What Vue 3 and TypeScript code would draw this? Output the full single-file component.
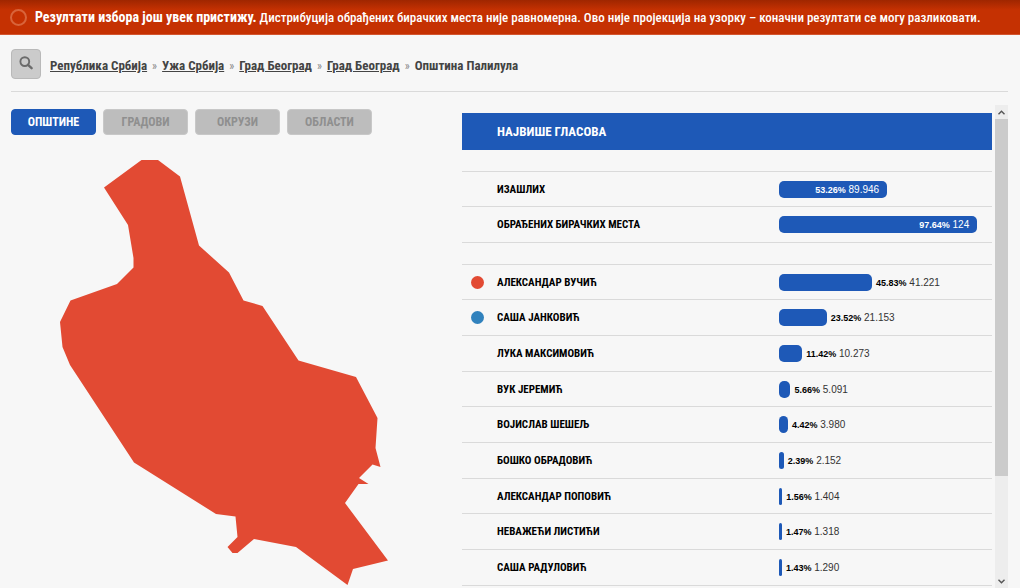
<script setup lang="ts">
import { ref } from 'vue'

interface Result {
  name: string
  percent: number
  label: string
  votes: string
  color?: string
}

const crumbs: string[] = ['Република Србија', 'Ужа Србија', 'Град Београд', 'Град Београд']
const levels: string[] = ['Општине', 'Градови', 'Окрузи', 'Области']
const activeLevel = ref(0)

const turnout: Result[] = [
  { name: 'Изашлих', percent: 53.26, label: '53.26%', votes: '89.946' },
  { name: 'Обрађених бирачких места', percent: 97.64, label: '97.64%', votes: '124' },
]

const candidates: Result[] = [
  { name: 'Александар Вучић', percent: 45.83, label: '45.83%', votes: '41.221', color: 'red' },
  { name: 'Саша Јанковић', percent: 23.52, label: '23.52%', votes: '21.153', color: 'blue' },
  { name: 'Лука Максимовић', percent: 11.42, label: '11.42%', votes: '10.273' },
  { name: 'Вук Јеремић', percent: 5.66, label: '5.66%', votes: '5.091' },
  { name: 'Војислав Шешељ', percent: 4.42, label: '4.42%', votes: '3.980' },
  { name: 'Бошко Обрадовић', percent: 2.39, label: '2.39%', votes: '2.152' },
  { name: 'Александар Поповић', percent: 1.56, label: '1.56%', votes: '1.404' },
  { name: 'Неважећи листићи', percent: 1.47, label: '1.47%', votes: '1.318' },
  { name: 'Саша Радуловић', percent: 1.43, label: '1.43%', votes: '1.290' },
]
</script>

<template>
  <div class="page">
    <div class="alert" role="status">
      <span class="ring"></span>
      <p><b>Резултати избора још увек пристижу.</b> Дистрибуција обрађених бирачких места није равномерна. Ово није пројекција на узорку – коначни резултати се могу разликовати.</p>
    </div>

    <header class="top">
      <button class="search" type="button" aria-label="Претрага">
        <svg width="14" height="14" viewBox="0 0 14 14" fill="none" stroke="#6b6b6b">
          <circle cx="5.8" cy="5.6" r="4.4" stroke-width="1.9" />
          <path d="M9 8.8 L12.6 12.2" stroke-width="2.3" stroke-linecap="round" />
        </svg>
      </button>
      <nav class="crumbs">
        <template v-for="(crumb, i) in crumbs" :key="i">
          <a href="#">{{ crumb }}</a><span class="sep">»</span>
        </template>
        <span>Општина Палилула</span>
      </nav>
    </header>

    <main class="content">
      <section class="map-side">
        <div class="levels">
          <button
            v-for="(level, i) in levels"
            :key="level"
            type="button"
            :class="{ active: i === activeLevel }"
            @click="activeLevel = i"
          >{{ level }}</button>
        </div>
        <svg class="map" viewBox="0 0 331 427" role="img" aria-label="Општина Палилула">
          <path d="M82.5 1H99L121 17.5L140 86.5L170 113.5L184.5 141.5L203.5 147L239.5 201.5L297 218L318.5 259L316.5 289L321.5 308L313.5 305.5L300 319L309.5 325H299.5L286 344L329 401.5L294 410L288.5 426L237 388L195 380L178.5 394H173.5L168.5 388L178.5 378L176.5 357.5L157 355L75 303.5L11 206L3.5 188L1 163L11.5 141.5L58 125L74.5 108.5V99L69 66L45 28.5Z" />
        </svg>
      </section>

      <section class="results">
        <h2>Највише гласова</h2>
        <table v-for="(group, g) in [turnout, candidates]" :key="g">
          <tbody>
            <tr v-for="row in group" :key="row.name">
              <td class="mark"><span v-if="row.color" class="dot" :class="row.color"></span></td>
              <th scope="row">{{ row.name }}</th>
              <td class="score">
                <div class="track">
                  <div class="bar" :style="{ width: row.percent + '%' }">
                    <span v-if="g === 0" class="value"><b>{{ row.label }}</b> {{ row.votes }}</span>
                  </div>
                  <span v-if="g === 1" class="value"><b>{{ row.label }}</b> {{ row.votes }}</span>
                </div>
              </td>
            </tr>
          </tbody>
        </table>
      </section>

      <div class="scroller">
        <button type="button" aria-label="Горе">
          <svg width="7" height="5" viewBox="0 0 7 5"><path d="M.5 4.2L3.5 1.2L6.5 4.2" /></svg>
        </button>
        <div class="thumb"></div>
        <button type="button" aria-label="Доле">
          <svg width="7" height="5" viewBox="0 0 7 5"><path d="M.5 .8L3.5 3.8L6.5 .8" /></svg>
        </button>
      </div>
    </main>
  </div>
</template>

<style>
body {
  margin: 0;
  background: #f7f7f7;
}
</style>

<style scoped>
.page {
  display: flex;
  flex-direction: column;
  min-height: 100vh;
  font-family: 'Roboto Condensed', 'Liberation Sans Narrow', Roboto, sans-serif;
}
button {
  font-family: inherit;
  cursor: pointer;
}
.alert {
  display: flex;
  align-items: center;
  gap: 8px;
  box-sizing: border-box;
  min-height: 35px;
  padding: 0 10px;
  color: #fff;
  background: linear-gradient(#9f2600, #c53102 10px);
  border-bottom: 1px solid #d3552f;
}
.ring {
  flex: none;
  box-sizing: border-box;
  width: 17px;
  height: 17px;
  border: 2px solid #d8643b;
  border-radius: 50%;
}
.alert p {
  margin: 0;
  font-size: 13px;
  font-weight: 500;
  line-height: 18px;
}
.alert b {
  font-size: 14px;
}
.top {
  display: flex;
  align-items: center;
  gap: 9px;
  margin: 0 12px 0 11px;
  padding: 14px 0 12px;
  border-bottom: 1px solid #dadada;
}
.search {
  display: flex;
  align-items: center;
  justify-content: center;
  width: 30px;
  height: 30px;
  padding: 0 0 2px;
  background: #cbcbcb;
  border: 1px solid #b9b9b9;
  border-radius: 4px;
}
.crumbs {
  padding-top: 3px;
  font-size: 13px;
  font-weight: 700;
  line-height: 16px;
  color: #444;
}
.crumbs a {
  color: inherit;
}
.sep {
  margin: 0 5px;
  font-size: 12px;
  font-weight: 400;
  color: #888;
}
.content {
  display: grid;
  flex: 1;
  grid-template-columns: minmax(0, 451fr) minmax(0, 530fr) 16px;
  margin: 0 12px 0 11px;
}
.levels {
  display: flex;
  gap: 7px;
  padding-top: 17px;
}
.levels button {
  width: 85px;
  height: 26px;
  padding: 0;
  font-size: 12px;
  font-weight: 700;
  text-transform: uppercase;
  color: #8f8f8f;
  background: #bdbdbd;
  border: 1px solid #c8c8c8;
  border-radius: 4px;
}
.levels button.active {
  color: #fff;
  background: #1e59b7;
  border-color: #1e59b7;
}
.map {
  display: block;
  width: 331px;
  margin: 24px 0 0 48px;
}
.map path {
  fill: #e24a33;
}
.results {
  padding-top: 21px;
}
.results h2 {
  margin: 0;
  padding: 0 35px;
  font-size: 13px;
  line-height: 37px;
  text-transform: uppercase;
  color: #fff;
  background: #1e59b7;
}
.results table {
  width: 100%;
  margin-top: 21px;
  border-collapse: separate;
  border-spacing: 0;
  table-layout: fixed;
  border-bottom: 1px solid #dadada;
}
.results td,
.results th {
  height: 35px;
  padding: 0;
  text-align: left;
  border-top: 1px solid #dadada;
}
.results tr:nth-child(3n + 1) > * {
  height: 34px;
}
.results th {
  font-size: 11px;
  text-transform: uppercase;
  color: #000;
}
.results .mark {
  width: 35px;
}
.results .score {
  width: 213px;
}
.dot {
  display: block;
  width: 13px;
  height: 13px;
  margin-left: 9px;
  border-radius: 50%;
}
.red {
  background: #e24a33;
}
.blue {
  background: #3182bd;
}
.track {
  display: flex;
  align-items: center;
  gap: 4px;
  margin-right: 10px;
}
.bar {
  display: flex;
  flex: none;
  align-items: center;
  justify-content: flex-end;
  height: 17px;
  border-radius: 5px;
  background: #1e59b7;
}
.value {
  padding-top: 1px;
  font-family: 'Liberation Sans', Arial, sans-serif;
  font-size: 10px;
  line-height: 12px;
  white-space: nowrap;
  color: #333;
}
.value b {
  font-size: 9px;
  color: #000;
}
.bar .value {
  padding-right: 8px;
  color: #fff;
}
.bar .value b {
  color: inherit;
}
.scroller {
  display: flex;
  flex-direction: column;
  justify-self: end;
  width: 13px;
  margin-top: 13px;
  background: #ededed;
}
.scroller button {
  display: flex;
  flex: none;
  align-items: center;
  justify-content: center;
  height: 14px;
  padding: 0;
  background: none;
  border: 0;
}
.scroller button:last-child {
  margin-top: auto;
}
.scroller path {
  fill: none;
  stroke: #555;
  stroke-width: 1.4;
}
.thumb {
  height: 74%;
  background: #cbcbcb;
}
</style>
